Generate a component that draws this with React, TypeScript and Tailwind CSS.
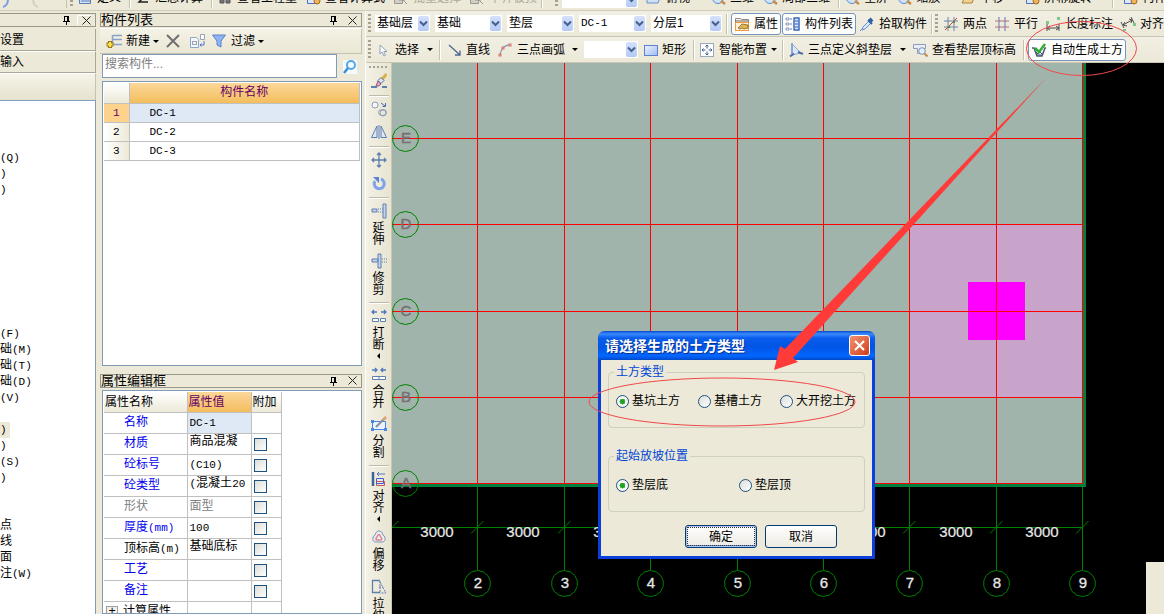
import React from "react";

type Kids = { children?: React.ReactNode; className?: string };

/* ---------- icons ---------- */

function Svg({ children }: Kids) {
  return (
    <svg width="16" height="16" viewBox="0 0 16 16" fill="none" className="shrink-0" aria-hidden="true">
      {children}
    </svg>
  );
}

const B = "#5f7fae";
const L = "#c3d4f3";

const icons: Record<string, React.ReactNode> = {
  cursor: <path d="M5 3v9l2-2 2 4 1.500-.8L8.800 9.500H12z" fill="#fff" stroke="#8f9fb8" />,
  line: <path d="M3 3l11 10M14 8.500V13H9" stroke="#4a6693" strokeWidth="1.300" />,
  arc: (
    <>
      <path d="M3 14C3 8 7 3 13 3" stroke="#8aa0c4" strokeWidth="1.300" />
      <rect x="2" y="12" width="2" height="2" stroke="#dc7468" />
      <rect x="5" y="5" width="2" height="2" stroke="#dc7468" />
      <rect x="12" y="2" width="2" height="2" stroke="#dc7468" />
    </>
  ),
  rect: (
    <>
      <defs>
        <linearGradient id="rectFill" x1="0" y1="0" x2="1" y2="1">
          <stop offset="0" stopColor="#eef3ff" />
          <stop offset="1" stopColor="#9dbcf5" />
        </linearGradient>
      </defs>
      <rect x="2.500" y="3.500" width="13" height="10" fill="url(#rectFill)" stroke="#5b82cf" />
    </>
  ),
  smart: (
    <>
      <rect x="1.500" y="1.500" width="13" height="13" fill="#fff" stroke="#3f5f93" strokeDasharray="1 1" />
      <path d="M8 3v3.500M8 9.500V13M3 8h3.500M9.500 8H13" stroke="#3f5f93" />
      <path d="M6.500 4.500L8 3l1.500 1.500M6.500 11.500L8 13l1.500-1.500M4.500 6.500L3 8l1.500 1.500M11.500 6.500L13 8l-1.500 1.500" stroke="#3f5f93" />
    </>
  ),
  slope: (
    <>
      <path d="M4 2l9 9-9 2z" fill="#dbe8fb" stroke="#8aa8d8" />
      <path d="M4 1v13" stroke="#7f9fd0" strokeWidth="1.500" />
      <path d="M2 14.500l4-3M10 10l5 2" stroke="#4f6fa8" strokeWidth="2" />
    </>
  ),
  view: (
    <>
      <path d="M1.500 2.500h12v4h-3v5h-5v-5h-4z" fill="#e8edf8" stroke="#8c9bc0" />
      <circle cx="10" cy="9" r="3.300" fill="#dff0fb" stroke="#7d90ad" />
      <path d="M12.500 11.500l3 3" stroke="#c08a4e" strokeWidth="2" />
    </>
  ),
  auto: (
    <>
      <path d="M1 6h2l3 8h5l3-8h1" stroke="#49597a" strokeWidth="1.500" />
      <path d="M5 10l2 2 2-2 2 2M5 13h6" stroke="#49597a" />
      <path d="M4 6l4 4 6-8" stroke="#2fae35" strokeWidth="2.500" />
    </>
  ),
  prop: (
    <>
      <path d="M1.500 2.500h5l1 1h7v11h-13z" fill="#fdf0dc" stroke="#8b8b8b" />
      <path d="M1 5h14" stroke="#6c6c6c" />
      <rect x="1.500" y="6.500" width="13" height="8" stroke="#f09a3a" />
      <path d="M4 12l4-4 6 1v3l-4 1-2-1-2 1z" fill="#e3b54d" stroke="#6f5216" strokeWidth=".7" />
    </>
  ),
  list: (
    <>
      <path d="M1 2h3v2H1zM1 7h3v2H1zM1 12h3v2H1z" stroke="#7080b0" strokeWidth=".8" />
      <path d="M5 3h2M5 8h2M5 13h2" stroke="#7080b0" />
      <rect x="9" y="2" width="5" height="12" fill="#dbe8ff" stroke="#2f5fb8" strokeWidth="1.400" />
      <path d="M10 5h3M10 8h3M10 11h3" stroke="#2f5fb8" />
    </>
  ),
  picker: (
    <>
      <path d="M3 14l1-3 6-6 2 2-6 6z" fill="#dce9fb" stroke="#5f8fd0" />
      <path d="M9 4l4 4" stroke="#2c5ea8" strokeWidth="2" />
      <path d="M11 5l2-2" stroke="#2c5ea8" strokeWidth="4" />
      <path d="M1 15l2-2" stroke="#5f8fd0" />
    </>
  ),
  hashRed: (
    <>
      <path d="M5 1v14M11 1v14M1 5h14M1 11h14" stroke="#6f83aa" />
      <path d="M2 14L14 2" stroke="#cf4036" />
      <path d="M5 10h2v2H5zM10 5h2v2h-2z" fill="#3a9c46" />
    </>
  ),
  hash: (
    <>
      <path d="M5 1v14M11 1v14" stroke="#5f79ad" />
      <path d="M1 5h14M1 11h14" stroke="#b66a7d" />
    </>
  ),
  dim: (
    <>
      <path d="M2 8v7M14 8v7M2 12h12M5 10l-3 2 3 2M11 10l3 2-3 2" stroke="#4b4b4b" />
      <path d="M1 5h3v3H1zM12 1h3v3h-3z" fill="#79c98a" />
    </>
  ),
  dimAlign: (
    <>
      <path d="M1 6l3 6M11 1l3 6M3 9l9-5M5 6L3 9l4 1M9 3l3 1-1 3" stroke="#4b4b4b" />
      <path d="M3 13h3v2H3zM13 7h3v3h-3z" fill="#79c98a" />
    </>
  ),
  newItem: (
    <>
      <path d="M7 2.500h9M7 6.500h9M7 11.500h9M6.500 2v9" stroke="#8aa1c8" strokeWidth="1.500" />
      <path d="M4 8v7M.5 11.500h7" stroke="#9a7b12" strokeWidth="4" />
      <path d="M4 9v5M1.500 11.500h5" stroke="#ffe14d" strokeWidth="2" />
    </>
  ),
  del: <path d="M2 2l12 12M14 2L2 14" stroke="#707070" strokeWidth="2" />,
  copy: (
    <>
      <path d="M1.500 4.500h6l2 2v8h-8z" fill="#f4f7fc" stroke="#8ea6c9" />
      <rect x="3.500" y="8.500" width="4" height="3" stroke="#9aa4b6" />
      <path d="M11.500 1.500h4v5h-4z" fill="#fff" stroke="#9aa4b6" />
      <path d="M15 8v4h-4M12.500 10.500L11 12l1.500 1.500" stroke="#4f74d0" />
    </>
  ),
  filter: <path d="M1.500 2h13L10 8v6l-4-2V8z" fill="#8fb4f2" stroke="#5b82cf" />,
  search: (
    <>
      <rect x="1" y="1" width="14" height="14" fill="#f4fafe" />
      <circle cx="9" cy="6" r="4" stroke="#53a7e8" strokeWidth="2" />
      <path d="M6 9l-4 5" stroke="#3f8fd6" strokeWidth="2.500" />
    </>
  ),
  brush: (
    <>
      <path d="M15.500 1l-5 6" stroke="#d9b04c" strokeWidth="3" />
      <path d="M10 4.500l3 3-3 3-3-3z" fill="#dfe6f4" stroke="#5f6f93" />
      <path d="M7 8l3 3-2 2H5z" fill="#e9a3bd" stroke="#8a5f80" />
      <path d="M0 14h6M11 14h5" stroke={B} strokeWidth="2" />
    </>
  ),
  copyShape: (
    <>
      <circle cx="4" cy="4" r="3" fill="#f6f8fd" stroke="#8d9cba" />
      <path d="M10 2l4 3M14.500 2v3.500h-3" stroke="#4a6db0" />
      <ellipse cx="11.500" cy="11.500" rx="4" ry="3" stroke="#8d9cba" />
      <circle cx="12" cy="12" r="3" stroke="#8d9cba" />
    </>
  ),
  mirror: (
    <>
      <path d="M.5 13.500L6 2v11.500zM15.500 13.500L10 2v11.500z" fill="#dbe6fa" stroke={B} />
      <path d="M8 1v14" stroke={B} />
    </>
  ),
  move: <path d="M8 1v14M1 8h14M6 3l2-2 2 2M6 13l2 2 2-2M3 6L1 8l2 2M13 6l2 2-2 2" stroke={B} strokeWidth="1.300" />,
  rotate: (
    <>
      <path d="M4 6a5 5 0 1 0 6-2" stroke="#7ea3e8" strokeWidth="3" />
      <path d="M2 2h6v6z" fill="#5b82d8" />
    </>
  ),
  extend: (
    <>
      <path d="M1 6h5v3H1zM12 1h3v14h-3z" fill={L} stroke={B} />
      <path d="M7 6h5M7 9h5" stroke={B} strokeDasharray="1 1" />
    </>
  ),
  trim: (
    <>
      <path d="M1 6h6v3H1zM7 1h3v14H7z" fill={L} stroke={B} />
      <path d="M11 6h5M11 9h5" stroke={B} strokeDasharray="1 1" />
    </>
  ),
  breakIt: (
    <>
      <path d="M1 4h5M3 2L1 4l2 2M15 4h-5M13 2l2 2-2 2" stroke="#5377c0" strokeWidth="1.300" />
      <path d="M1.500 10.500h6v3h-6zM9.500 10.500h5v3h-5z" fill="#fff" stroke={B} />
    </>
  ),
  merge: (
    <>
      <path d="M1 4h5M4 2l2 2-2 2M15 4h-5M12 2l-2 2 2 2" stroke="#5377c0" strokeWidth="1.300" />
      <path d="M1.500 10.500h13v3h-13zM8 10v4" fill="#fff" stroke={B} />
    </>
  ),
  split: (
    <>
      <path d="M1.500 5.500h13v8h-13z" fill="#eaf2ff" stroke="#4b86e0" />
      <path d="M0 4h3v3H0zM13 12h3v3h-3zM0 12h3v3H0z" fill="#4b86e0" />
      <path d="M5 11l8-8" stroke="#8a8f96" strokeWidth="2" />
      <path d="M12 4l3-3" stroke="#e0a070" strokeWidth="2.500" />
    </>
  ),
  align: (
    <>
      <path d="M2 1v14" stroke="#3f6397" strokeWidth="2.500" />
      <path d="M6 3h8M8 1L6 3l2 2" stroke="#5377c0" />
      <path d="M5.500 10.500h8v4h-8z" stroke="#c85360" />
      <path d="M5.500 7.500h7v5h-7z" stroke="#3f5fd0" />
    </>
  ),
  offset: (
    <>
      <path d="M8 2c2 0 3 1 4 4 3 2 3 7-1 7H5C1 13 1 8 4 6c1-3 2-4 4-4z" fill="#e6eef8" stroke="#7e93b8" />
      <path d="M8 5.500c1 0 1 1 2 3 2 2 0 2.500-1 2.500H6.500c-2 0-2-1.500-.5-3 1-2 1-2.500 2-2.500z" stroke="#e0837c" strokeWidth="1.400" />
    </>
  ),
  stretch: (
    <>
      <path d="M9 1.500H1.500v12H9" stroke={B} strokeWidth="1.300" />
      <path d="M9 2v12M9 3l6 11H9M8 8h4" stroke={B} strokeDasharray="2 1" />
    </>
  ),
  sheet: <path d="M2.500 3.500h11v10h-11zM4 11h9" fill="#cfe0f7" stroke="#5b7fb8" />,
  sigma: <path d="M12 4H4l4 4-4 4h9" stroke="#222" strokeWidth="1.500" />,
  bino: <path d="M3 9h4v4H3zM9 9h4v4H9z" fill="#777" stroke="#555" />,
  gear: (
    <>
      <path d="M2.500 4.500h9v9h-9z" fill="#dbe8ff" stroke="#4b72c0" />
      <circle cx="12" cy="11" r="3" fill="#f1b45a" stroke="#a06a1e" />
    </>
  ),
  gray: <path d="M1.500 8.500h8v5h-8zM9 9l5 5M6 5h6v5H6z" fill="#d2d0c6" stroke="#9a988e" />,
  cube: <path d="M1 9l4-4h10l-3 8H1z" fill="#cfe0f7" stroke="#6d8fc4" />,
  globe: (
    <>
      <circle cx="8" cy="8" r="5.500" fill="#cfe3fa" stroke="#5b8fce" />
      <path d="M11 11l4 3" stroke="#c98b45" strokeWidth="2.500" />
    </>
  ),
  hand: <path d="M2 13l3-6 5-2 4 3-2 5z" fill="#f3d28e" stroke="#a98443" />,
};

function Icon({ name }: { name: string }) {
  return <Svg>{icons[name]}</Svg>;
}

/* ---------- small parts ---------- */

function Sep({ className = "" }: Kids) {
  return <span className={`h-5 w-0.5 shrink-0 border-l border-[#c5c2b0] bg-white ${className}`} />;
}

function Grip({ className = "" }: Kids) {
  return <span className={`h-5 w-[3px] shrink-0 bg-[repeating-linear-gradient(to_bottom,#a6a290_0_2px,transparent_2px_4px)] ${className}`} />;
}

function Caret({ className = "" }: Kids) {
  return <span className={`h-0 w-0 shrink-0 border-x-[3px] border-t-[3px] border-x-transparent border-t-black ${className}`} />;
}

function Tool({ icon, label, caret, className = "" }: { icon: string; label: string; caret?: string; className?: string }) {
  return (
    <button type="button" className={`flex h-5 shrink-0 items-center whitespace-nowrap ${className}`}>
      <Icon name={icon} />
      <span className="ml-1">{label}</span>
      {caret && <Caret className={caret} />}
    </button>
  );
}

function Framed({ icon, label, className = "" }: { icon: string; label: string; className?: string }) {
  return (
    <button
      type="button"
      className={`flex h-[22px] shrink-0 items-center gap-1 whitespace-nowrap rounded-[3px] border border-[#7795bb] bg-[#fdfdfb] px-0.5 ${className}`}
    >
      <Icon name={icon} />
      {label}
    </button>
  );
}

function Combo({ name, value, className }: { name: string; value: string; className: string }) {
  return (
    <span className={`relative h-[17px] shrink-0 bg-white ${className}`}>
      <select aria-label={name} className="block h-4 w-full appearance-none bg-transparent pl-0.5 pr-3 leading-4 outline-none">
        <option>{value}</option>
      </select>
      <span className="pointer-events-none absolute inset-y-px right-px flex w-[11px] items-center justify-center rounded-[2px] bg-gradient-to-b from-[#d5e1fc] to-[#b4c9f5]">
        <svg width="9" height="7" viewBox="0 0 9 7" fill="none" aria-hidden="true">
          <path d="M1 1.500l3.500 3.500L8 1.500" stroke="#45608c" strokeWidth="2" />
        </svg>
      </span>
    </span>
  );
}

function Pin() {
  return (
    <svg width="9" height="10" viewBox="0 0 9 10" fill="none" aria-hidden="true" shapeRendering="crispEdges">
      <path d="M2.500 6V1.500h4V6M1 6.500h7M4.500 7v3M5.500 1v5" stroke="#000" />
    </svg>
  );
}

function Cross() {
  return (
    <svg width="9" height="9" viewBox="0 0 9 9" fill="none" aria-hidden="true">
      <path d="M.5.5l8 8M8.500.5l-8 8" stroke="#222" />
    </svg>
  );
}

function PanelHead({ title }: { title: string }) {
  return (
    <header className="flex h-[14px] shrink-0 items-center border border-[#9a978a] pr-1">
      <h2 className="flex-1 text-[13px] leading-3">{title}</h2>
      <button type="button" aria-label={`固定${title}`} className="mr-2.5">
        <Pin />
      </button>
      <button type="button" aria-label={`关闭${title}`}>
        <Cross />
      </button>
    </header>
  );
}

/* ---------- top strip ---------- */

function TopStrip() {
  return (
    <div className="flex h-[11px] shrink-0 items-end overflow-hidden border-b border-[#cfccba] bg-[#ece9d8] pb-0.5">
      <div className="flex w-[67px] shrink-0 items-end justify-start gap-4 border-r border-[#c5c2b0]">
        <svg width="12" height="10" viewBox="0 0 12 10" fill="none" aria-hidden="true">
          <path d="M3 9c3-1 5-4 5-8" stroke="#7d9fe0" strokeWidth="2" />
        </svg>
        <svg width="12" height="10" viewBox="0 0 12 10" fill="none" aria-hidden="true">
          <path d="M10 9C7 8 5 5 5 1" stroke="#d2d0c4" strokeWidth="2" />
        </svg>
      </div>
      <Grip className="ml-[3px]" />
      <Tool icon="sheet" label="定义" className="ml-1" />
      <Sep className="ml-2" />
      <Tool icon="sigma" label="汇总计算" className="ml-1" />
      <Sep className="ml-2" />
      <Tool icon="bino" label="查看工程量" className="ml-1" />
      <Tool icon="gear" label="查看计算式" className="ml-2" />
      <Tool icon="gray" label="批量选择" className="ml-2 text-[#aca899]" />
      <Tool icon="gray" label="平齐板顶" className="ml-2 text-[#aca899]" />
      <Sep className="ml-1" />
      <Grip className="ml-3" />
      <Combo name="视图" value="" className="ml-1 w-[76px]" />
      <Tool icon="cube" label="俯视" className="ml-2" />
      <Tool icon="globe" label="三维" className="ml-5" />
      <Tool icon="globe" label="局部三维" className="ml-2" />
      <Sep className="ml-2" />
      <Tool icon="globe" label="全屏" className="ml-1" />
      <Tool icon="globe" label="缩放" className="ml-2" />
      <Tool icon="hand" label="平移" className="ml-5" />
      <Tool icon="gear" label="屏幕旋转" className="ml-5" />
      <Sep className="ml-5" />
      <Tool icon="gear" label="构件图元" className="ml-2" />
    </div>
  );
}

/* ---------- left navigation ---------- */

const treeRows = [
  "", "", "", "(Q)", ")", ")", "", "", "", "", "", "", "", "", "(F)", "础(M)", "础(T)", "础(D)", "(V)",
  "", ")", ")", "(S)", ")", "", "", "点", "线", "面", "注(W)",
];

const mono = "font-['Liberation_Mono','Noto_Sans_CJK_SC',monospace]";

/* Chinese runs are set at 12px, Latin runs at 11px. */
function Mixed({ text }: { text: string }) {
  const parts = text.split(/([\u4e00-\u9fff]+)/).filter(Boolean);
  return (
    <>
      {parts.map((p, i) => (
        <span key={i} className={/[\u4e00-\u9fff]/.test(p) ? "text-[12px]" : "text-[11px]"}>
          {p}
        </span>
      ))}
    </>
  );
}

function Navigator() {
  return (
    <aside className="flex w-24 shrink-0 flex-col overflow-hidden pt-0.5">
      <header className="flex h-[14px] shrink-0 items-center justify-end border border-l-0 border-[#9a978a] pr-1">
        <button type="button" aria-label="固定导航栏" className="mr-1.5">
          <Pin />
        </button>
        <button type="button" aria-label="关闭导航栏" className="border-l border-t border-l-white border-t-white pl-1">
          <Cross />
        </button>
      </header>
      <button type="button" className="mt-0.5 h-[22px] shrink-0 border-b border-r border-[#aaa796] text-left leading-5">
        设置
      </button>
      <button type="button" className="h-[22px] shrink-0 border-b border-r border-t border-[#aaa796] border-t-white text-left leading-5">
        输入
      </button>
      <div className="h-[27px] shrink-0 border-r border-t border-[#c5c2b0] border-t-white bg-gradient-to-b from-[#f6f4ea] to-[#e6e2cf]" />
      <ul className={`min-h-0 flex-1 overflow-hidden border-r border-t border-[#7f9db9] bg-white pt-px ${mono}`}>
        {treeRows.map((t, i) => (
          <li key={i} className="h-4 whitespace-nowrap leading-4">
            <span className={i === 20 ? "inline-block w-2.5 bg-[#ece9d8]" : ""}>
              <Mixed text={t} />
            </span>
          </li>
        ))}
      </ul>
    </aside>
  );
}

/* ---------- component list and properties ---------- */

type Prop = { name: string; value: string; tone: string; check: boolean; top?: boolean };

const blue = "text-[#0000ee]";
const props: Prop[] = [
  { name: "名称", value: "DC-1", tone: blue, check: false },
  { name: "材质", value: "商品混凝", tone: blue, check: true, top: true },
  { name: "砼标号", value: "(C10)", tone: blue, check: true },
  { name: "砼类型", value: "(混凝土20", tone: blue, check: true, top: true },
  { name: "形状", value: "面型", tone: "text-[#808080]", check: true },
  { name: "厚度(mm)", value: "100", tone: blue, check: true },
  { name: "顶标高(m)", value: "基础底标", tone: "text-black", check: true, top: true },
  { name: "工艺", value: "", tone: blue, check: true },
  { name: "备注", value: "", tone: blue, check: true },
];

function MiddlePanels() {
  return (
    <section className="ml-1 flex w-[262px] shrink-0 flex-col overflow-hidden pt-0.5">
      <PanelHead title="构件列表" />
      <div className="mt-px flex h-[26px] shrink-0 items-center border border-l-0 border-t-white border-[#c5c2b0] bg-gradient-to-b from-[#f4f2e6] to-[#ebe7d5] pl-1.5">
        <Tool icon="newItem" label="新建" caret="ml-[3px]" />
        <button type="button" aria-label="删除" className="ml-1.5">
          <Icon name="del" />
        </button>
        <button type="button" aria-label="复制" className="ml-2">
          <Icon name="copy" />
        </button>
        <Tool icon="filter" label="过滤" caret="ml-[3px]" className="ml-1.5" />
      </div>
      <div className="flex h-[25px] shrink-0 pl-0.5">
        <input
          type="text"
          aria-label="搜索构件"
          placeholder="搜索构件..."
          className="h-6 min-w-0 flex-1 border border-[#7f9db9] bg-white px-0.5 pb-1 outline-none placeholder:text-[#808080]"
        />
        <button type="button" aria-label="搜索" className="flex w-[25px] items-center justify-center">
          <Icon name="search" />
        </button>
      </div>
      <div className="ml-0.5 mt-0.5 min-h-0 flex-[285] basis-0 overflow-hidden border border-[#7f9db9] bg-white px-px pt-px">
        <table className="w-full table-fixed border-collapse">
          <thead>
            <tr className="h-5">
              <th scope="col" aria-label="序号" className="w-[25px] border-b border-r border-[#c0c0c0] bg-gradient-to-b from-white to-[#ece9d8] p-0" />
              <th scope="col" className="border-b border-r border-[#c0c0c0] bg-gradient-to-b from-[#fbd798] to-[#f3bd5c] p-0 font-normal leading-[19px] text-[#660066]">
                构件名称
              </th>
            </tr>
          </thead>
          <tbody className={`${mono} text-[11px]`}>
            {["DC-1", "DC-2", "DC-3"].map((n, i) => (
              <tr key={n} className="h-[19px]">
                <td
                  className={`border-b border-r border-[#c0c0c0] p-0 text-center leading-4 ${
                    i === 0 ? "bg-[#fdd28c] text-[#660066]" : "bg-gradient-to-r from-white to-[#ece9d8]"
                  }`}
                >
                  {i + 1}
                </td>
                <td className={`border-b border-r border-[#c0c0c0] p-0 pl-5 leading-4 ${i === 0 ? "bg-[#dfe8f5]" : ""}`}>{n}</td>
              </tr>
            ))}
          </tbody>
        </table>
      </div>
      <div className="mt-2 shrink-0">
        <PanelHead title="属性编辑框" />
      </div>
      <div className="ml-0.5 mt-0.5 min-h-0 flex-[224] basis-0 overflow-hidden border border-[#7f9db9] bg-white px-px pt-px">
        <table className="w-[178px] table-fixed border-collapse">
          <thead>
            <tr className="h-[21px] text-left">
              <th scope="col" className="w-[83px] border-b border-r border-[#c0c0c0] bg-gradient-to-b from-white to-[#ece9d8] p-0 pl-px font-normal leading-5">
                属性名称
              </th>
              <th scope="col" className="w-16 border-b border-r border-[#c0c0c0] bg-gradient-to-b from-[#fbd798] to-[#f3bd5c] p-0 pl-px font-normal leading-5 text-[#660066]">
                属性值
              </th>
              <th scope="col" className="border-b border-r border-[#c0c0c0] bg-gradient-to-b from-white to-[#ece9d8] p-0 pl-px font-normal leading-5">
                附加
              </th>
            </tr>
          </thead>
          <tbody className={mono}>
            {props.map((p, i) => (
              <tr key={p.name} className="h-[21px]">
                <td className={`whitespace-nowrap border-b border-r border-[#c0c0c0] p-0 pl-5 leading-5 ${p.tone}`}>
                  <Mixed text={p.name} />
                </td>
                <td
                  className={`overflow-hidden whitespace-nowrap border-b border-r border-[#c0c0c0] p-0 pl-0.5 ${
                    p.top ? "align-top leading-4" : "leading-5"
                  } ${i === 0 ? "bg-[#dfe8f5]" : ""} ${p.name === "形状" ? "text-[#808080]" : ""}`}
                >
                  <Mixed text={p.value} />
                </td>
                <td className="border-b border-r border-[#c0c0c0] p-0 pl-0.5">
                  {p.check && (
                    <input
                      type="checkbox"
                      aria-label={`${p.name}附加`}
                      className="block h-[13px] w-[13px] appearance-none border border-[#1c5180] bg-gradient-to-br from-[#dcdcd7] to-white"
                    />
                  )}
                </td>
              </tr>
            ))}
            <tr className="h-[21px]">
              <td className="whitespace-nowrap border-b border-r border-[#c0c0c0] p-0 pl-0.5 leading-5">
                <button type="button" className="flex items-center gap-[5px]">
                  <span className="flex h-3 w-3 items-center justify-center border border-[#a0a0a0] bg-[#f1efe6] text-[12px] leading-none">+</span>
                  计算属性
                </button>
              </td>
              <td className="border-b border-r border-[#c0c0c0] p-0" />
              <td className="border-b border-r border-[#c0c0c0] p-0" />
            </tr>
          </tbody>
        </table>
      </div>
    </section>
  );
}

/* ---------- toolbars ---------- */

function ComponentBar() {
  return (
    <div className="flex h-[26px] shrink-0 items-center overflow-hidden border-b border-[#c9c6b4] bg-gradient-to-b from-[#f1efe3] to-[#ece9d8] pl-0.5">
      <Grip />
      <div className="ml-1 flex gap-[5px]">
        <Combo name="楼层" value="基础层" className="w-[55px]" />
        <Combo name="类别" value="基础" className="w-[67px]" />
        <Combo name="构件类型" value="垫层" className="w-[67px]" />
        <Combo name="构件" value="DC-1" className={`w-[67px] ${mono} text-[11px]`} />
        <Combo name="分层" value="分层1" className="w-[71px]" />
      </div>
      <Sep className="ml-1" />
      <Framed icon="prop" label="属性" className="ml-[3px]" />
      <Framed icon="list" label="构件列表" className="ml-px" />
      <Tool icon="picker" label="拾取构件" className="ml-[3px]" />
      <Sep className="ml-1" />
      <Grip className="ml-0.5" />
      <div className="ml-[5px] flex gap-[7px]">
        <Tool icon="hashRed" label="两点" />
        <Tool icon="hash" label="平行" />
        <Tool icon="dim" label="长度标注" />
        <Tool icon="dimAlign" label="对齐标注" />
      </div>
    </div>
  );
}

function DrawBar() {
  return (
    <div className="flex h-[26px] shrink-0 items-center overflow-hidden border-b border-[#c9c6b4] bg-gradient-to-b from-[#f1efe3] to-[#ece9d8] pl-0.5">
      <Grip />
      <Tool icon="cursor" label="选择" caret="ml-2" className="ml-1" />
      <Sep className="ml-1.5" />
      <Tool icon="line" label="直线" className="ml-[5px]" />
      <Tool icon="arc" label="三点画弧" caret="ml-[7px]" className="ml-[7px]" />
      <Combo name="画弧方式" value="" className="ml-1.5 w-[54px]" />
      <Tool icon="rect" label="矩形" className="ml-1" />
      <Sep className="ml-[7px]" />
      <Tool icon="smart" label="智能布置" caret="ml-1" className="ml-1" />
      <Sep className="ml-[5px]" />
      <Tool icon="slope" label="三点定义斜垫层" caret="ml-2" className="ml-1" />
      <Tool icon="view" label="查看垫层顶标高" className="ml-1.5" />
      <Sep className="ml-[7px]" />
      <Framed icon="auto" label="自动生成土方" className="ml-[3px]" />
    </div>
  );
}

function VTool({ icon, label, more }: { icon: string; label: string; more?: boolean }) {
  return (
    <button type="button" aria-label={label} className="flex w-4 flex-col items-center">
      <Icon name={icon} />
      <span className="mt-[3px] w-3 break-all leading-3">{label}</span>
      {more && <span className="mt-0.5 border-y-[3px] border-r-[3px] border-y-transparent border-r-black" />}
    </button>
  );
}

function VIcon({ icon, label }: { icon: string; label: string }) {
  return (
    <button type="button" aria-label={label}>
      <Icon name={icon} />
    </button>
  );
}

function HSep() {
  return <span className="-mb-[3px] -mt-px h-0.5 w-5 shrink-0 border-t border-[#bfbba6] bg-white" />;
}

function EditBar() {
  return (
    <div className="flex w-[26px] shrink-0 flex-col items-center overflow-hidden border-r border-[#c9c6b4] bg-gradient-to-r from-[#f3f1e6] to-[#e8e4d1] pt-[3px]">
      <span className="h-0.5 w-5 shrink-0 bg-[repeating-linear-gradient(to_right,#a6a290_0_2px,transparent_2px_4px)]" />
      <div className="mt-[5px] flex flex-col items-center gap-[7px]">
        <VIcon icon="brush" label="删除图元" />
        <HSep />
        <VIcon icon="copyShape" label="复制图元" />
        <VIcon icon="mirror" label="镜像" />
        <HSep />
        <VIcon icon="move" label="移动" />
        <VIcon icon="rotate" label="旋转" />
        <HSep />
        <VTool icon="extend" label="延伸" />
        <VTool icon="trim" label="修剪" />
        <HSep />
        <VTool icon="breakIt" label="打断" more />
        <VTool icon="merge" label="合并" />
        <VTool icon="split" label="分割" />
        <HSep />
        <VTool icon="align" label="对齐" more />
        <VTool icon="offset" label="偏移" />
        <VTool icon="stretch" label="拉伸" />
      </div>
    </div>
  );
}

/* ---------- drawing ---------- */

const cols = [85, 172, 258, 345, 431, 517, 604, 690];
/* Spans whose dimension text stays clear of the dialog. */
const dims = [45, 131, 218, 477, 564, 650];
const rows: [string, number][] = [["E", 75], ["D", 161], ["C", 248], ["B", 334], ["A", 420]];

function ring(cx: number, cy: number) {
  return Array.from({ length: 14 }, (_, i) => {
    const a = (i / 14) * Math.PI * 2 - Math.PI / 2;
    return `${(cx + 13 * Math.cos(a)).toFixed(1)},${(cy + 13 * Math.sin(a)).toFixed(1)}`;
  }).join(" ");
}

function Plan() {
  return (
    <svg className="block h-full w-full" aria-label="基础平面图" fontFamily="'Liberation Sans', sans-serif">
      <rect width="694" height="424" fill="#007f3f" />
      <rect width="691" height="421" fill="#a1b4ab" />
      <rect x="517" y="161" width="173" height="173" fill="#c8a3ca" />
      <rect x="576" y="219" width="57" height="58" fill="#ff00ff" />
      <g shapeRendering="crispEdges">
        {cols.map((x) => (
          <g key={x}>
            <rect x={x} y="0" width="1" height="421" fill="#ff0000" />
            <rect x={x} y="424" width="1" height="83" fill="#008000" />
          </g>
        ))}
        {rows.map(([n, y]) => (
          <rect key={n} x="0" y={y} width="691" height="1" fill="#ff0000" />
        ))}
        <rect x="0" y="464" width="691" height="1" fill="#008000" />
      </g>
      {[0, ...cols].map((x) => (
        <path key={x} d={`M${x - 6} 470.500l12.500-12.500`} stroke="#008000" />
      ))}
      {dims.map((x) => (
        <text key={x} x={x} y="474" fontSize="15" fill="#e8e8e8" stroke="#e8e8e8" strokeWidth="0.200" textAnchor="middle">
          3000
        </text>
      ))}
      {cols.map((x, i) => (
        <g key={x}>
          <polygon points={ring(x + 0.5, 520.5)} fill="none" stroke="#008000" />
          <text x={x + 1} y="525" fontSize="15" fill="#e8e8e8" stroke="#e8e8e8" strokeWidth="0.300" textAnchor="middle">
            {i + 2}
          </text>
        </g>
      ))}
      {rows.map(([n, y]) => (
        <g key={n}>
          <polygon points={ring(13.5, y + 0.5)} fill="none" stroke="#008000" />
          <text x="14" y={y + 5} fontSize="15" fill="#777074" stroke="#777074" strokeWidth="0.500" textAnchor="middle">
            {n}
          </text>
        </g>
      ))}
    </svg>
  );
}

/* ---------- dialog ---------- */

function Radio({ group, label, on, className = "" }: { group: string; label: string; on?: boolean; className?: string }) {
  return (
    <label className={`flex items-center gap-[3px] whitespace-nowrap ${className}`}>
      <input
        type="radio"
        name={group}
        defaultChecked={on}
        className="h-[13px] w-[13px] appearance-none rounded-full border border-[#1d5281] bg-[linear-gradient(135deg,#dcdcd7,#ffffff)] checked:bg-[radial-gradient(circle,#21a121_0_2px,#7fd07f_3px,#f5f5f2_3px)]"
      />
      {label}
    </label>
  );
}

function SoilDialog() {
  return (
    <div
      role="dialog"
      aria-labelledby="soil-title"
      className="absolute left-[206px] top-[268px] flex w-[277px] flex-col rounded-t-[7px] border-b-[3px] border-l-[3px] border-r-[3px] border-[#0a3fdc] bg-[#ece9d8]"
    >
      <div className="-mx-[3px] flex h-[29px] items-center justify-between rounded-t-[7px] bg-[linear-gradient(to_bottom,#0a48cc_0,#3a8bff_3px,#0a5cec_7px,#0055e5_16px,#0366ff_25px,#0048c8_29px)] pl-[7px] pr-[5px]">
        <h2 id="soil-title" className="text-[14px] font-bold leading-5 text-white [text-shadow:1px_1px_0_#0a2f8a]">
          请选择生成的土方类型
        </h2>
        <button
          type="button"
          aria-label="关闭"
          className="flex h-[21px] w-[21px] items-center justify-center rounded-[3px] border border-white bg-gradient-to-br from-[#f0906f] to-[#cf3c16]"
        >
          <svg width="13" height="13" viewBox="0 0 13 13" fill="none" aria-hidden="true">
            <path d="M2 2l9 9M11 2l-9 9" stroke="#fff" strokeWidth="2" />
          </svg>
        </button>
      </div>
      <div className="px-[7px] pb-2 pt-1">
        <fieldset className="h-16 rounded-[4px] border border-[#d0d0bf] pl-[7px]">
          <legend className="-ml-0.5 px-0.5 leading-4 text-[#0046d5]">土方类型</legend>
          <div className="flex pt-[13px]">
            <Radio group="soil" label="基坑土方" on className="w-[82px]" />
            <Radio group="soil" label="基槽土方" className="w-[82px]" />
            <Radio group="soil" label="大开挖土方" />
          </div>
        </fieldset>
        <fieldset className="mt-5 h-16 rounded-[4px] border border-[#d0d0bf] pl-[7px]">
          <legend className="-ml-0.5 px-0.5 leading-4 text-[#0046d5]">起始放坡位置</legend>
          <div className="flex pt-[13px]">
            <Radio group="slope" label="垫层底" on className="w-[123px]" />
            <Radio group="slope" label="垫层顶" />
          </div>
        </fieldset>
        <div className="mt-[13px] flex justify-end gap-2 pr-7">
          <button
            type="button"
            className="h-[23px] w-[72px] rounded-[3px] border border-[#003c74] bg-gradient-to-b from-white to-[#eceae2] p-px shadow-[inset_0_0_0_1px_#a9c4f2,inset_0_-2px_0_#6f9be8]"
          >
            <span className="flex h-full items-center justify-center border border-dotted border-[#333]">确定</span>
          </button>
          <button type="button" className="h-[23px] w-[72px] rounded-[3px] border border-[#003c74] bg-gradient-to-b from-white to-[#eceae2]">
            取消
          </button>
        </div>
      </div>
    </div>
  );
}

/* ---------- page ---------- */

export default function App() {
  return (
    <div className="relative flex h-screen flex-col overflow-hidden bg-[#ece9d8] font-['Liberation_Sans','Noto_Sans_CJK_SC',sans-serif] text-[12px] leading-4 text-black">
      <TopStrip />
      <div className="flex min-h-0 flex-1">
        <Navigator />
        <MiddlePanels />
        <main className="ml-[3px] flex min-w-0 flex-1 flex-col border-l border-white">
          <ComponentBar />
          <DrawBar />
          <div className="flex min-h-0 flex-1">
            <EditBar />
            <div className="relative min-w-0 flex-1 overflow-hidden bg-black">
              <Plan />
              <SoilDialog />
              <span className="absolute bottom-0 right-0 h-[52px] w-[18px] bg-[#ece9d8]" />
            </div>
          </div>
        </main>
      </div>
      <svg className="pointer-events-none absolute left-0 top-0 h-full w-full" fill="none" aria-hidden="true">
        <ellipse cx="1081.500" cy="48.500" rx="55" ry="27" stroke="#f0484a" />
        <ellipse cx="722" cy="402" rx="133" ry="24" stroke="#f0484a" />
        <path d="M1047 77L785 349l-5-3-6 24 24-8-5-4z" fill="#fe3b38" />
      </svg>
    </div>
  );
}
